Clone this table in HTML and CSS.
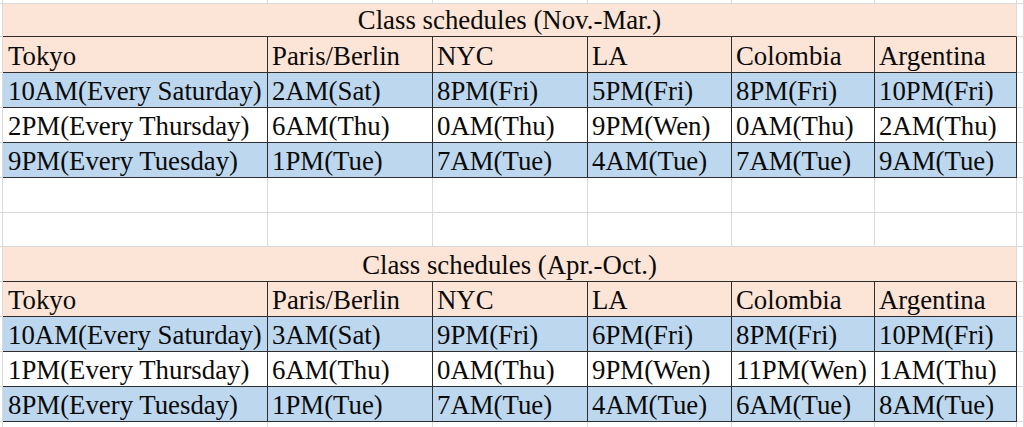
FILE: index.html
```html
<!DOCTYPE html>
<html lang="en">
<head>
<meta charset="utf-8">
<title>Class schedules</title>
<link rel="stylesheet" href="styles.css">
</head>
<body>
<div class="sheet">
  <div class="row strip">
    <div class="cell sp"></div><div class="cell c1 grid"></div><div class="cell c2 grid"></div><div class="cell c3 grid"></div><div class="cell c4 grid"></div><div class="cell c5 grid"></div><div class="cell c6 grid"></div><div class="cell tail"></div>
  </div>

  <div class="row h33">
    <div class="cell sp"></div><div class="cell title">Class schedules (Nov.-Mar.)</div><div class="cell tail"></div>
  </div>
  <div class="row h36 head">
    <div class="cell sp"></div><div class="cell c1">Tokyo</div><div class="cell c2">Paris/Berlin</div><div class="cell c3">NYC</div><div class="cell c4">LA</div><div class="cell c5">Colombia</div><div class="cell c6">Argentina</div><div class="cell tail"></div>
  </div>
  <div class="row h35 blue">
    <div class="cell sp"></div><div class="cell c1">10AM(Every Saturday)</div><div class="cell c2">2AM(Sat)</div><div class="cell c3">8PM(Fri)</div><div class="cell c4">5PM(Fri)</div><div class="cell c5">8PM(Fri)</div><div class="cell c6">10PM(Fri)</div><div class="cell tail"></div>
  </div>
  <div class="row h35 white">
    <div class="cell sp"></div><div class="cell c1">2PM(Every Thursday)</div><div class="cell c2">6AM(Thu)</div><div class="cell c3">0AM(Thu)</div><div class="cell c4">9PM(Wen)</div><div class="cell c5">0AM(Thu)</div><div class="cell c6">2AM(Thu)</div><div class="cell tail"></div>
  </div>
  <div class="row h35 blue">
    <div class="cell sp"></div><div class="cell c1">9PM(Every Tuesday)</div><div class="cell c2">1PM(Tue)</div><div class="cell c3">7AM(Tue)</div><div class="cell c4">4AM(Tue)</div><div class="cell c5">7AM(Tue)</div><div class="cell c6">9AM(Tue)</div><div class="cell tail"></div>
  </div>

  <div class="row h35">
    <div class="cell sp"></div><div class="cell c1 grid"></div><div class="cell c2 grid"></div><div class="cell c3 grid"></div><div class="cell c4 grid"></div><div class="cell c5 grid"></div><div class="cell c6 grid"></div><div class="cell tail"></div>
  </div>
  <div class="row h34">
    <div class="cell sp"></div><div class="cell c1 grid"></div><div class="cell c2 grid"></div><div class="cell c3 grid"></div><div class="cell c4 grid"></div><div class="cell c5 grid"></div><div class="cell c6 grid"></div><div class="cell tail"></div>
  </div>

  <div class="row h35">
    <div class="cell sp"></div><div class="cell title">Class schedules (Apr.-Oct.)</div><div class="cell tail"></div>
  </div>
  <div class="row h35 head">
    <div class="cell sp"></div><div class="cell c1">Tokyo</div><div class="cell c2">Paris/Berlin</div><div class="cell c3">NYC</div><div class="cell c4">LA</div><div class="cell c5">Colombia</div><div class="cell c6">Argentina</div><div class="cell tail"></div>
  </div>
  <div class="row h35 blue">
    <div class="cell sp"></div><div class="cell c1">10AM(Every Saturday)</div><div class="cell c2">3AM(Sat)</div><div class="cell c3">9PM(Fri)</div><div class="cell c4">6PM(Fri)</div><div class="cell c5">8PM(Fri)</div><div class="cell c6">10PM(Fri)</div><div class="cell tail"></div>
  </div>
  <div class="row h35 white">
    <div class="cell sp"></div><div class="cell c1">1PM(Every Thursday)</div><div class="cell c2">6AM(Thu)</div><div class="cell c3">0AM(Thu)</div><div class="cell c4">9PM(Wen)</div><div class="cell c5">11PM(Wen)</div><div class="cell c6">1AM(Thu)</div><div class="cell tail"></div>
  </div>
  <div class="row h35 blue">
    <div class="cell sp"></div><div class="cell c1">8PM(Every Tuesday)</div><div class="cell c2">1PM(Tue)</div><div class="cell c3">7AM(Tue)</div><div class="cell c4">4AM(Tue)</div><div class="cell c5">6AM(Tue)</div><div class="cell c6">8AM(Tue)</div><div class="cell tail"></div>
  </div>
  <div class="row h10">
    <div class="cell sp"></div><div class="cell c1 grid"></div><div class="cell c2 grid"></div><div class="cell c3 grid"></div><div class="cell c4 grid"></div><div class="cell c5 grid"></div><div class="cell c6 grid"></div><div class="cell tail"></div>
  </div>
</div>
</body>
</html>
```

FILE: styles.css
```css
html, body {
  margin: 0;
  padding: 0;
  background: #ffffff;
}

.sheet {
  display: flex;
  flex-direction: column;
  width: 1024px;
  height: 427px;
  overflow: hidden;
  font-family: "Liberation Serif", "Times New Roman", serif;
  font-size: 26.8px;
  color: #0a0a0a;
}

.row {
  display: flex;
  flex: 0 0 auto;
}

.strip { height: 4px; }
.h33 { height: 33px; }
.h34 { height: 34px; }
.h35 { height: 35px; }
.h36 { height: 36px; }
.h10 { height: 10px; }

.cell {
  box-sizing: border-box;
  height: 100%;
  display: flex;
  align-items: flex-end;
  padding: 0 0 1px 4px;
  line-height: 29px;
  white-space: nowrap;
  overflow: hidden;
  border-right: 1px solid #dadada;
  border-bottom: 1px solid #dadada;
}

.sp { width: 3px; padding: 0; flex: 0 0 3px; }
.tail { flex: 1 1 auto; padding: 0; }

.c1 { flex: 0 0 265px; padding-left: 5px; }
.c2 { flex: 0 0 165px; }
.c3 { flex: 0 0 155px; }
.c4 { flex: 0 0 144px; }
.c5 { flex: 0 0 143px; }
.c6 { flex: 0 0 142px; }

.title {
  flex: 0 0 1014px;
  justify-content: center;
  padding-left: 0;
  background: #fce4d6;
  border-bottom-color: #2e2e2e;
}

.head .c1, .head .c2, .head .c3, .head .c4, .head .c5, .head .c6 {
  background: #fce4d6;
  border-right-color: #2e2e2e;
  border-bottom-color: #2e2e2e;
}

.blue .c1, .blue .c2, .blue .c3, .blue .c4, .blue .c5, .blue .c6 {
  background: #bdd7ee;
  border-right-color: #2e2e2e;
  border-bottom-color: #2e2e2e;
}

.white .c1, .white .c2, .white .c3, .white .c4, .white .c5, .white .c6 {
  background: #ffffff;
  border-right-color: #2e2e2e;
  border-bottom-color: #2e2e2e;
}

.grid { padding: 0; }
```
